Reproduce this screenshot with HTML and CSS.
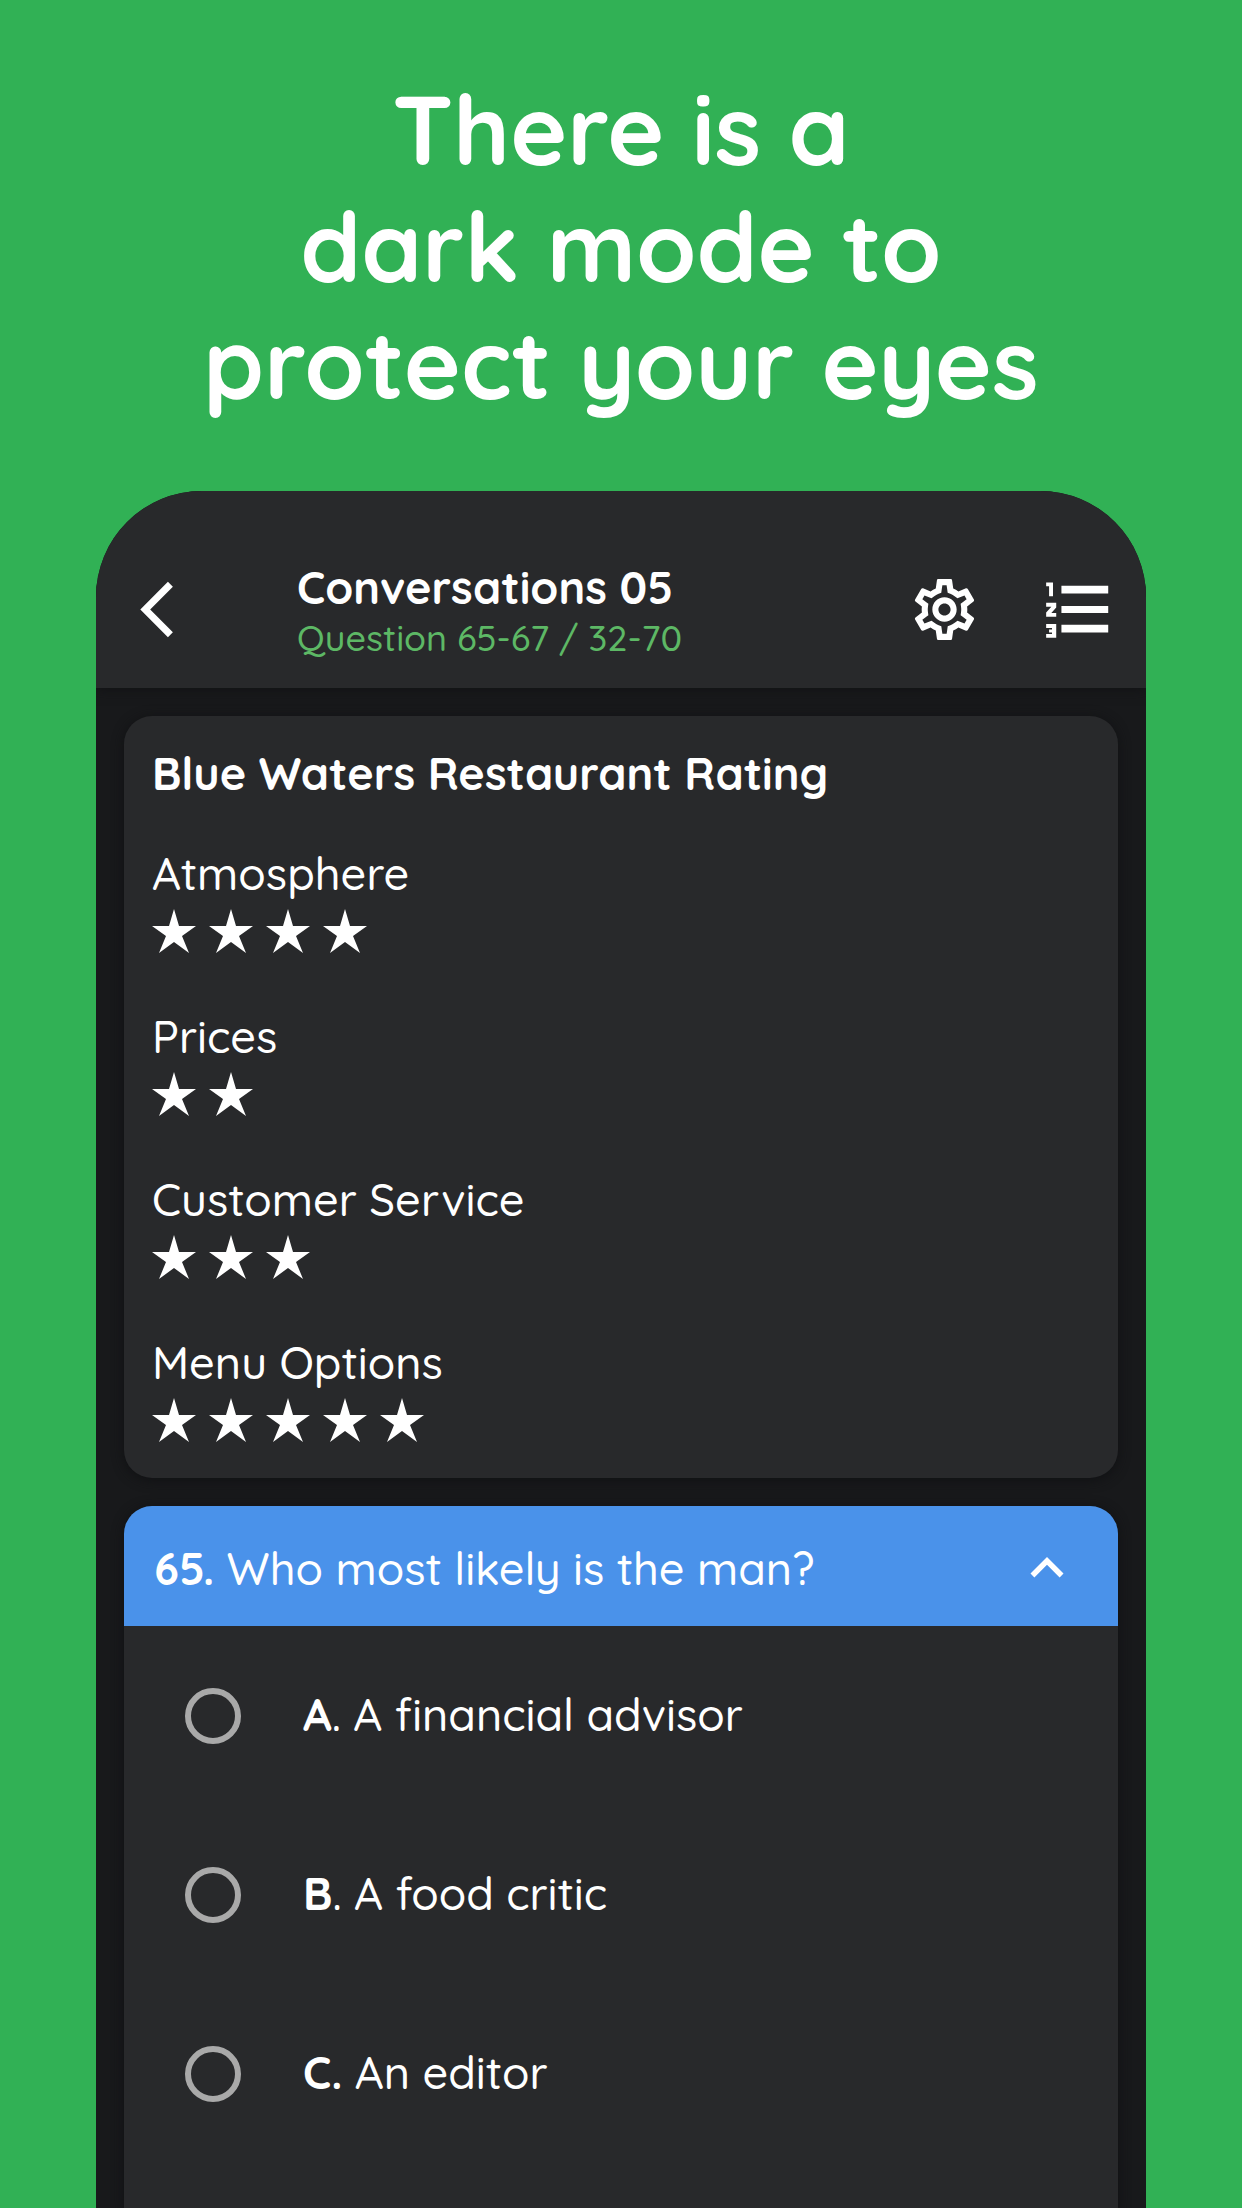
FILE: index.html
```html
<!DOCTYPE html>
<html lang="en">
<head>
<meta charset="utf-8">
<meta name="viewport" content="width=device-width, initial-scale=1">
<title>Conversations 05</title>
<link rel="stylesheet" href="styles.css">
</head>
<body>
<svg class="defs" aria-hidden="true">
  <symbol id="star" viewBox="0 0 44 44"><path d="M22 0l5 17h17L30 27l7 17-15-11L7 44l7-17L0 17h17z"/></symbol>
</svg>
<h1 class="headline">There is a<br>dark mode to<br>protect your eyes</h1>
<main class="phone">
  <header class="bar">
    <button class="icon-button" type="button" aria-label="Back">
      <svg class="icon icon-back" viewBox="0 0 24 24"><path d="M17.51 3.87L15.73 2.1 5.84 12l9.9 9.9 1.77-1.77L9.38 12z"/></svg>
    </button>
    <div class="titles">
      <h2 class="title">Conversations 05</h2>
      <p class="subtitle">Question 65-67 / 32-70</p>
    </div>
    <button class="icon-button" type="button" aria-label="Settings">
      <svg class="icon icon-gear" viewBox="0 0 24 24"><path d="M19.43 12.98c.04-.32.07-.64.07-.98s-.03-.66-.07-.98l2.11-1.65c.19-.15.24-.42.12-.64l-2-3.46c-.09-.16-.26-.25-.44-.25-.06 0-.12.01-.17.03l-2.49 1c-.52-.4-1.08-.73-1.69-.98l-.38-2.65C14.46 2.18 14.25 2 14 2h-4c-.25 0-.46.18-.49.42l-.38 2.65c-.61.25-1.17.59-1.69.98l-2.49-1c-.06-.02-.12-.03-.18-.03-.17 0-.34.09-.43.25l-2 3.46c-.13.22-.07.49.12.64l2.11 1.65c-.04.32-.07.65-.07.98s.03.66.07.98l-2.11 1.65c-.19.15-.24.42-.12.64l2 3.46c.09.16.26.25.44.25.06 0 .12-.01.17-.03l2.49-1c.52.4 1.08.73 1.69.98l.38 2.65c.03.24.24.42.49.42h4c.25 0 .46-.18.49-.42l.38-2.65c.61-.25 1.17-.59 1.69-.98l2.49 1c.06.02.12.03.18.03.17 0 .34-.09.43-.25l2-3.46c.12-.22.07-.49-.12-.64l-2.11-1.65zm-1.98-1.71c.04.31.05.52.05.73s-.02.43-.05.73l-.14 1.13.89.7 1.08.84-.7 1.21-1.27-.51-1.04-.42-.9.68c-.43.32-.84.56-1.25.73l-1.06.43-.16 1.13-.2 1.35h-1.4l-.19-1.35-.16-1.13-1.06-.43c-.43-.18-.83-.41-1.23-.71l-.91-.7-1.06.43-1.27.51-.7-1.21 1.08-.84.89-.7-.14-1.13c-.03-.31-.05-.54-.05-.74s.02-.43.05-.73l.14-1.13-.89-.7-1.08-.84.7-1.21 1.27.51 1.04.42.9-.68c.43-.32.84-.56 1.25-.73l1.06-.43.16-1.13.2-1.35h1.39l.19 1.35.16 1.13 1.06.43c.43.18.83.41 1.23.71l.91.7 1.06-.43 1.27-.51.7 1.21-1.07.85-.89.7.14 1.13zM12 8c-2.210 0-4 1.790-4 4s1.790 4 4 4 4-1.790 4-4-1.790-4-4-4zm0 6c-1.100 0-2-.9-2-2s.9-2 2-2 2 .9 2 2-.9 2-2 2z"/></svg>
    </button>
    <button class="icon-button" type="button" aria-label="Question list">
      <svg class="icon icon-list" viewBox="0 0 24 24"><path d="M2.200 16.300h3.100v4.200H2.200v-1.100H4v-.5h-.9v-.9H4v-.5H2.200zM3.100 7.800h1.200V3.500H2.200v1.200h.9zM2.200 9.800h3.100v1.400L3.800 12.900h1.500v1.200H2.200v-1.300L3.800 11H2.200zM6.900 4.500v2.400h14.400V4.500zm0 14.400h14.400v-2.400H6.900zm0-6h14.400v-2.100H6.900z"/></svg>
    </button>
  </header>
  <div class="content">
    <section class="card rating">
      <h3 class="rating-title">Blue Waters Restaurant Rating</h3>
      <dl class="scores">
        <div class="score">
          <dt>Atmosphere</dt>
          <dd class="stars" aria-label="4 stars"><svg><use href="#star"/></svg><svg><use href="#star"/></svg><svg><use href="#star"/></svg><svg><use href="#star"/></svg></dd>
        </div>
        <div class="score">
          <dt>Prices</dt>
          <dd class="stars" aria-label="2 stars"><svg><use href="#star"/></svg><svg><use href="#star"/></svg></dd>
        </div>
        <div class="score">
          <dt>Customer Service</dt>
          <dd class="stars" aria-label="3 stars"><svg><use href="#star"/></svg><svg><use href="#star"/></svg><svg><use href="#star"/></svg></dd>
        </div>
        <div class="score">
          <dt>Menu Options</dt>
          <dd class="stars" aria-label="5 stars"><svg><use href="#star"/></svg><svg><use href="#star"/></svg><svg><use href="#star"/></svg><svg><use href="#star"/></svg><svg><use href="#star"/></svg></dd>
        </div>
      </dl>
    </section>
    <section class="card question">
      <button class="question-head" type="button" aria-expanded="true">
        <span><b>65.</b> Who most likely is the man?</span>
        <svg class="icon icon-chevron" viewBox="0 0 24 24"><path d="M12 8l-6 6 1.410 1.410L12 10.830l4.590 4.580L18 14z"/></svg>
      </button>
      <label class="option"><input type="radio" name="q65" value="A"><span class="answer"><b>A</b>. A financial advisor</span></label>
      <label class="option"><input type="radio" name="q65" value="B"><span class="answer"><b>B</b>. A food critic</span></label>
      <label class="option"><input type="radio" name="q65" value="C"><span class="answer"><b>C.</b> An editor</span></label>
    </section>
  </div>
</main>
</body>
</html>
```
FILE: styles.css
```css
* { box-sizing: border-box; margin: 0; padding: 0; }

body {
  display: flex;
  flex-direction: column;
  min-height: 100vh;
  background: #31b155;
  color: #fff;
  font-family: Quicksand, Lato, sans-serif;
  font-size: 45px;
  font-weight: 500;
  line-height: 60px;
}

b { font-weight: 700; }
button { border: 0; background: none; color: inherit; font: inherit; cursor: pointer; }
.defs { display: none; }
.icon { display: block; fill: currentColor; }

.headline {
  padding: 70px 24px;
  font-size: 97px;
  font-weight: 700;
  line-height: 117px;
  text-align: center;
}

.phone {
  display: flex;
  flex: 1;
  flex-direction: column;
  margin: 0 96px;
  overflow: hidden;
  border-radius: 106px 106px 0 0;
  background: #18191b;
}

.bar {
  display: flex;
  align-items: center;
  height: 197px;
  padding: 40px 29px 0 28px;
  background: #28292b;
  box-shadow: 0 0 12px #101113;
}
.titles { flex: 1; padding: 3px 0 0 106px; }
.title { font-size: 45px; font-weight: 700; line-height: 54px; }
.subtitle { color: #5db865; font-size: 36px; line-height: 48px; }
.icon-back { width: 67px; height: 67px; }
.icon-gear { width: 73px; height: 73px; }
.icon-list { width: 78px; height: 78px; }
.icon-button + .icon-button { margin-left: 58px; }

.content {
  display: flex;
  flex: 1;
  flex-direction: column;
  gap: 28px;
  padding: 28px 28px 0;
}
.card { background: #28292b; box-shadow: 0 2px 12px #101113; }

.rating { padding: 27px 28px 36px; border-radius: 28px; }
.rating-title { font-size: 45px; font-weight: 700; }
.scores { display: flex; flex-direction: column; gap: 53px; margin-top: 40px; }
.score { display: flex; flex-direction: column; gap: 6px; }
.stars { display: flex; gap: 13px; }
.stars svg { width: 44px; height: 44px; fill: #fff; }

.question { flex: 1; overflow: hidden; border-radius: 28px 28px 0 0; }
.question-head {
  display: flex;
  align-items: center;
  justify-content: space-between;
  width: 100%;
  height: 120px;
  padding: 3px 38px 0 30px;
  background: #4a92ea;
  text-align: left;
}
.icon-chevron { width: 66px; height: 66px; }

.option { display: flex; align-items: center; gap: 62px; height: 179px; padding: 0 61px; }
.option input {
  appearance: none;
  width: 56px;
  height: 56px;
  border: 6px solid #a9a9a9;
  border-radius: 50%;
}
.option input:checked { border-width: 18px; }
.answer { padding-bottom: 3px; }
```
